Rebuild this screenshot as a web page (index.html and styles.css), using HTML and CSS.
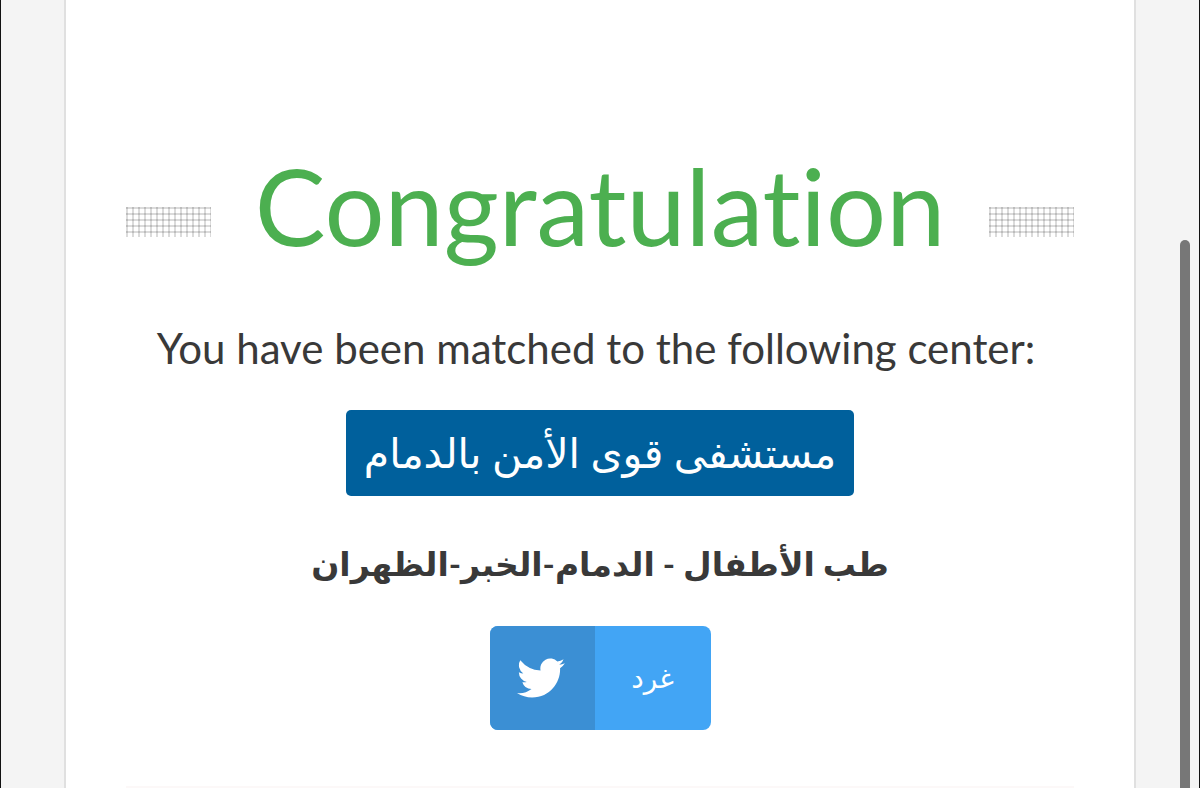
FILE: index.html
```html
<!DOCTYPE html>
<html lang="en">
<head>
<meta charset="utf-8">
<meta name="viewport" content="width=device-width, initial-scale=1">
<title>Congratulation</title>
<link rel="stylesheet" href="styles.css">
</head>
<body>
<main class="card">
  <header class="heading">
    <span class="dots"></span>
    <h1 class="title">Congratulation</h1>
    <span class="dots"></span>
  </header>
  <p class="message">You have been matched to the following center:</p>
  <p class="center" lang="ar" dir="rtl">مستشفى قوى الأمن بالدمام</p>
  <p class="program" lang="ar" dir="rtl">طب الأطفال - الدمام-الخبر-الظهران</p>
  <button class="tweet" type="button">
    <span class="tweet-icon">
      <svg viewBox="0 0 24 24" width="48" height="48" aria-hidden="true"><path fill="#fff" d="M23.95 4.57a10 10 0 0 1-2.82.77 4.96 4.96 0 0 0 2.16-2.72 9.9 9.9 0 0 1-3.12 1.18 4.92 4.92 0 0 0-8.38 4.48A13.93 13.93 0 0 1 1.64 3.16a4.92 4.92 0 0 0 1.52 6.57 4.9 4.9 0 0 1-2.23-.61v.06a4.92 4.92 0 0 0 3.95 4.83 5 5 0 0 1-2.21.08 4.94 4.94 0 0 0 4.6 3.42A9.87 9.87 0 0 1 0 19.54a13.94 13.94 0 0 0 7.55 2.21c9.05 0 14-7.5 14-13.98 0-.21 0-.42-.02-.63a9.94 9.94 0 0 0 2.42-2.57z"/></svg>
    </span>
    <span class="tweet-label" lang="ar">غرد</span>
  </button>
  <hr class="rule">
</main>
<div class="scroll-thumb"></div>
</body>
</html>
```
FILE: styles.css
```css
* { box-sizing: border-box; }
body {
  margin: 0;
  min-height: 100vh;
  padding: 0 63px;
  background: #f4f4f4;
  border: solid #111;
  border-width: 0 1px;
  overflow: hidden;
  font-family: Lato, "DejaVu Sans", sans-serif;
  color: #393939;
}
.card {
  display: flex;
  flex-direction: column;
  align-items: center;
  min-height: 100vh;
  padding: 139px 60px 0;
  background: #fff;
  border: solid #e0e0e0;
  border-width: 0 2px;
}
.heading {
  display: flex;
  align-items: center;
  gap: 44px;
  width: 100%;
}
.dots {
  flex: 1;
  height: 30px;
  margin-top: 34px;
  background:
    linear-gradient(90deg, rgba(0, 0, 0, .14) 2px, transparent 2px) 0 0 / 6px 6px,
    linear-gradient(rgba(0, 0, 0, .14) 2px, transparent 2px) 0 0 / 6px 6px;
}
.title {
  margin: 0;
  font-size: 106px;
  font-weight: 400;
  font-variant-ligatures: none;
  line-height: 132px;
  color: #4caf50;
}
.message {
  margin: 52px 0 37px;
  padding-right: 8px;
  font-size: 42px;
  line-height: 50px;
}
.center {
  margin: 0;
  padding: 0 18px;
  border-radius: 5px;
  background: #00609c;
  color: #fff;
  font-size: 41px;
  line-height: 86px;
}
.program {
  margin: 37px 0 33px;
  font-size: 33px;
  font-weight: 700;
  line-height: 60px;
}
.tweet {
  display: flex;
  height: 104px;
  padding: 0;
  border: 0;
  border-radius: 8px;
  overflow: hidden;
  background: #42a5f5;
  color: #fff;
  font: 28px "DejaVu Sans", sans-serif;
}
.tweet-icon, .tweet-label {
  display: flex;
  align-items: center;
  justify-content: center;
  height: 100%;
}
.tweet-icon { width: 105px; padding-right: 3px; background: #3b8fd4; }
.tweet-label { width: 116px; }
.rule {
  width: 100%;
  margin: 56px 0 0;
  border: 0;
  border-top: 3px solid #fcf8f8;
}
.scroll-thumb {
  position: absolute;
  top: 240px;
  right: 10px;
  bottom: 0;
  width: 10px;
  border-radius: 5px 5px 0 0;
  background: #777;
}
```
